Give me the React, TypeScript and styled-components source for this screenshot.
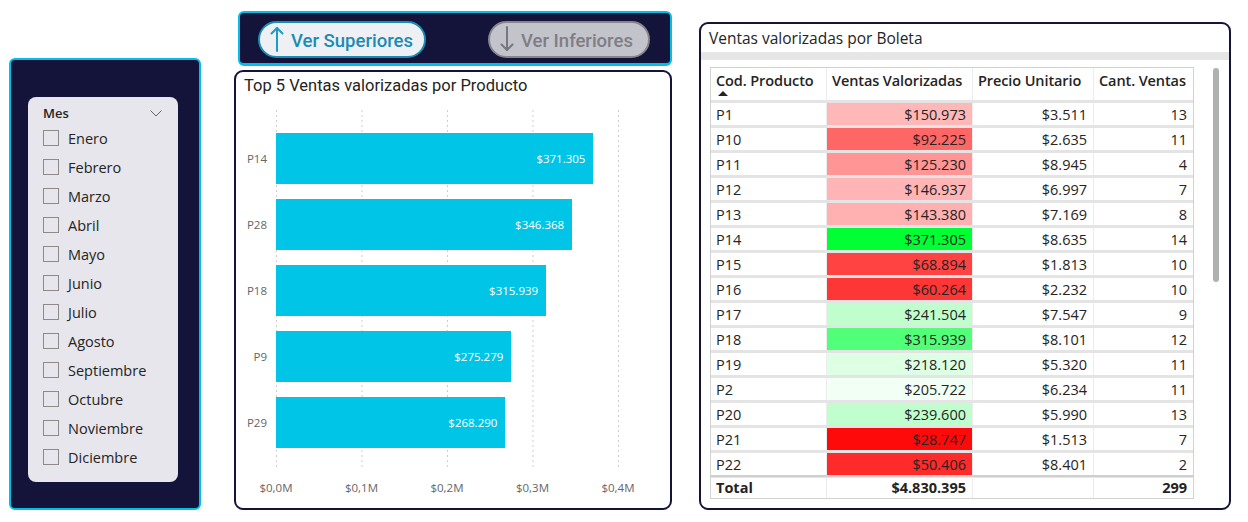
import React from "react";
import styled, { createGlobalStyle } from "styled-components";

const NAVY = "#141339";
const CYAN = "#01bfe6";
const BAR = "#01c5e6";

const Global = createGlobalStyle`
  html, body { margin: 0; padding: 0; background: #ffffff; }
  body { font-family: "Open Sans", "Noto Sans", sans-serif; color: #222; }
  * { box-sizing: border-box; }
`;

const Page = styled.div`
  width: 1248px;
  height: 522px;
  display: flex;
  align-items: flex-start;
  padding-left: 9px;
`;

/* ---------- Slicer ---------- */
const SlicerPanel = styled.div`
  margin-top: 58px;
  width: 192px;
  height: 452px;
  background: ${NAVY};
  border: 2px solid ${CYAN};
  border-radius: 6px;
  padding: 37px 0 0 17px;
`;

const SlicerCard = styled.div`
  width: 150px;
  height: 385px;
  background: #e6e6ec;
  border-radius: 8px;
  padding: 6px 0 0 15px;
`;

const SlicerHeader = styled.div`
  display: flex;
  align-items: center;
  justify-content: space-between;
  height: 20px;
  padding-right: 16px;
  font-size: 13px;
  font-weight: 600;
  color: #252423;
`;

const ItemList = styled.div`
  display: flex;
  flex-direction: column;
  gap: 13px;
  margin-top: 7px;
`;

const Item = styled.div`
  display: flex;
  align-items: center;
  height: 16px;
  gap: 9px;
  font-size: 14.5px;
  color: #252423;
`;

const Box = styled.span`
  width: 16px;
  height: 16px;
  border: 1px solid #8d8a87;
  background: #e6e6ec;
  flex: none;
`;

/* ---------- Middle ---------- */
const MiddleCol = styled.div`
  margin-left: 33px;
  width: 438px;
  display: flex;
  flex-direction: column;
  gap: 4px;
  padding-top: 11px;
`;

const ButtonBar = styled.div`
  margin-left: 4px;
  width: 434px;
  height: 55px;
  background: ${NAVY};
  border: 2px solid ${CYAN};
  border-bottom-width: 3px;
  border-radius: 6px;
  display: flex;
  align-items: center;
  justify-content: space-between;
  padding: 2px 20px 0 18px;
`;

const NavButton = styled.div<{ $active?: boolean }>`
  height: 37px;
  width: ${(p) => (p.$active ? "168px" : "162px")};
  border-radius: 19px;
  border: 2px solid ${(p) => (p.$active ? "#1b8db4" : "#85858c")};
  background: ${(p) => (p.$active ? "#eff0f4" : "#c3c3cb")};
  color: ${(p) => (p.$active ? "#1a8cb5" : "#7e7e85")};
  display: flex;
  align-items: center;
  gap: 7px;
  padding-left: 10px;
  font-family: "Roboto", "Open Sans", sans-serif;
  font-weight: 500;
  font-size: 18.5px;
`;

const ButtonLabel = styled.span`
  padding-top: 3px;
  white-space: nowrap;
`;

const ChartCard = styled.div`
  width: 438px;
  height: 440px;
  border: 2px solid ${NAVY};
  border-radius: 9px;
  background: #fff;
  display: flex;
  flex-direction: column;
`;

const CardTitle = styled.div<{ $din?: boolean }>`
  height: 28px;
  line-height: 28px;
  padding-left: 8px;
  font-family: ${(p) =>
    p.$din ? `"Roboto", "Open Sans", sans-serif` : `"Open Sans", sans-serif`};
  font-weight: ${(p) => (p.$din ? 400 : 500)};
  font-size: ${(p) => (p.$din ? "16.5px" : "15.5px")};
  color: #252423;
  white-space: nowrap;
`;

const Plot = styled.div`
  position: relative;
  margin-top: 10px;
  height: 360px;
  padding-top: 23px;
  display: flex;
  flex-direction: column;
  gap: 15px;
`;

const GridSvg = styled.svg`
  position: absolute;
  left: 40px;
  top: 0;
  z-index: 0;
`;

const BarRow = styled.div`
  position: relative;
  z-index: 1;
  height: 51px;
  display: flex;
  align-items: center;
`;

const CatLabel = styled.div`
  width: 40px;
  padding-right: 9px;
  text-align: right;
  font-size: 11.5px;
  color: #666;
`;

const Bar = styled.div`
  height: 51px;
  background: ${BAR};
  display: flex;
  align-items: center;
  justify-content: flex-end;
  padding-right: 8px;
  color: #fff;
  font-size: 11.5px;
`;

const AxisRow = styled.div`
  display: flex;
  margin-left: -2.75px;
  margin-top: 8px;
  height: 18px;
  align-items: center;
`;

const Tick = styled.div`
  width: 85.5px;
  text-align: center;
  font-size: 11.5px;
  color: #666;
`;

/* ---------- Table ---------- */
const TableCard = styled.div`
  margin-left: 27px;
  margin-top: 22px;
  width: 532px;
  height: 488px;
  border: 2px solid ${NAVY};
  border-radius: 9px;
  background: #fff;
  display: flex;
  flex-direction: column;
`;

const Band = styled.div`
  height: 8px;
  background: #e6e6e6;
`;

const TableArea = styled.div`
  display: flex;
  gap: 19px;
  margin-top: 7px;
  padding-left: 9px;
`;

const Table = styled.div`
  width: 484px;
  border: 1px solid #d2d2d2;
`;

const Row = styled.div<{ $kind?: "head" | "body" | "total" }>`
  display: grid;
  grid-template-columns: 116px 146px 121px 99px;
  height: ${(p) =>
    p.$kind === "head" ? "35px" : p.$kind === "total" ? "23px" : "25px"};
  border-bottom: ${(p) =>
    p.$kind === "total" ? "none" : "3px solid #e4e4e4"};
  border-top: ${(p) => (p.$kind === "total" ? "2px solid #cfcfcf" : "none")};
  margin-top: ${(p) => (p.$kind === "total" ? "-3px" : "0")};
`;

const Cell = styled.div<{ $right?: boolean; $bold?: boolean; $bg?: string; $last?: boolean }>`
  display: flex;
  align-items: center;
  justify-content: ${(p) => (p.$right ? "flex-end" : "flex-start")};
  padding: 0 6px 0 5px;
  font-size: 14.5px;
  font-weight: ${(p) => (p.$bold ? 700 : 400)};
  color: #252423;
  background: ${(p) => p.$bg || "transparent"};
  border-right: ${(p) => (p.$last ? "none" : "1px solid #ececec")};
  white-space: nowrap;
`;

const HeadCell = styled.div<{ $last?: boolean }>`
  display: flex;
  flex-direction: column;
  justify-content: flex-start;
  padding: 3px 0 0 5px;
  font-size: 14.5px;
  font-weight: 600;
  color: #252423;
  border-right: ${(p) => (p.$last ? "none" : "1px solid #ececec")};
  white-space: nowrap;
  letter-spacing: -0.1px;
`;

const SortTri = styled.span`
  width: 0;
  height: 0;
  margin: 1px 0 0 2px;
  border-left: 5px solid transparent;
  border-right: 5px solid transparent;
  border-bottom: 5px solid #252423;
`;

const Scrollbar = styled.div`
  width: 6px;
  height: 214px;
  margin-top: 1px;
  border-radius: 3px;
  background: #b0b0b0;
`;

const months = [
  "Enero", "Febrero", "Marzo", "Abril", "Mayo", "Junio", "Julio",
  "Agosto", "Septiembre", "Octubre", "Noviembre", "Diciembre",
];

const top5 = [
  { p: "P14", v: 371305, l: "$371.305" },
  { p: "P28", v: 346368, l: "$346.368" },
  { p: "P18", v: 315939, l: "$315.939" },
  { p: "P9", v: 275279, l: "$275.279" },
  { p: "P29", v: 268290, l: "$268.290" },
];

const rows: [string, string, string, string, string][] = [
  ["P1", "$150.973", "$3.511", "13", "#ffb8b8"],
  ["P10", "$92.225", "$2.635", "11", "#ff6666"],
  ["P11", "$125.230", "$8.945", "4", "#ff9595"],
  ["P12", "$146.937", "$6.997", "7", "#ffb5b5"],
  ["P13", "$143.380", "$7.169", "8", "#ffb1b1"],
  ["P14", "$371.305", "$8.635", "14", "#00ff33"],
  ["P15", "$68.894", "$1.813", "10", "#ff4242"],
  ["P16", "$60.264", "$2.232", "10", "#ff3636"],
  ["P17", "$241.504", "$7.547", "9", "#c0ffcd"],
  ["P18", "$315.939", "$8.101", "12", "#52ff78"],
  ["P19", "$218.120", "$5.320", "11", "#ddffe4"],
  ["P2", "$205.722", "$6.234", "11", "#f1fff4"],
  ["P20", "$239.600", "$5.990", "13", "#c0ffcd"],
  ["P21", "$28.747", "$1.513", "7", "#ff0a0a"],
  ["P22", "$50.406", "$8.401", "2", "#ff2a2a"],
];

const PX_PER_UNIT = 855 / 1000000;

const Arrow = ({ up, color }: { up: boolean; color: string }) => (
  <svg width="14" height="28" viewBox="0 0 14 28">
    {up ? (
      <g stroke={color} strokeWidth="2" fill="none" strokeLinecap="round" strokeLinejoin="round">
        <path d="M7 26 V3" />
        <path d="M1.5 8.5 L7 3 L12.5 8.5" />
      </g>
    ) : (
      <g stroke={color} strokeWidth="2" fill="none" strokeLinecap="round" strokeLinejoin="round">
        <path d="M7 2 V25" />
        <path d="M1.5 19.5 L7 25 L12.5 19.5" />
      </g>
    )}
  </svg>
);

export default function App() {
  return (
    <>
      <Global />
      <Page>
        <SlicerPanel>
          <SlicerCard>
            <SlicerHeader>
              <span>Mes</span>
              <svg width="12" height="7" viewBox="0 0 12 7">
                <path d="M0.5 0.5 L6 6 L11.5 0.5" stroke="#666" strokeWidth="1" fill="none" />
              </svg>
            </SlicerHeader>
            <ItemList>
              {months.map((m) => (
                <Item key={m}>
                  <Box />
                  <span>{m}</span>
                </Item>
              ))}
            </ItemList>
          </SlicerCard>
        </SlicerPanel>

        <MiddleCol>
          <ButtonBar>
            <NavButton $active>
              <Arrow up color="#1b9cc6" />
              <ButtonLabel>Ver Superiores</ButtonLabel>
            </NavButton>
            <NavButton>
              <Arrow up={false} color="#77777e" />
              <ButtonLabel>Ver Inferiores</ButtonLabel>
            </NavButton>
          </ButtonBar>
          <ChartCard>
            <CardTitle $din>Top 5 Ventas valorizadas por Producto</CardTitle>
            <Plot>
              <GridSvg width="350" height="360">
                {[0, 1, 2, 3, 4].map((i) => (
                  <line
                    key={i}
                    x1={0.5 + i * 85.5}
                    x2={0.5 + i * 85.5}
                    y1={0}
                    y2={360}
                    stroke="#cfcfcf"
                    strokeWidth="1"
                    strokeDasharray="2 3"
                  />
                ))}
              </GridSvg>
              {top5.map((b) => (
                <BarRow key={b.p}>
                  <CatLabel>{b.p}</CatLabel>
                  <Bar style={{ width: `${b.v * PX_PER_UNIT}px` }}>{b.l}</Bar>
                </BarRow>
              ))}
            </Plot>
            <AxisRow>
              {["$0,0M", "$0,1M", "$0,2M", "$0,3M", "$0,4M"].map((t) => (
                <Tick key={t}>{t}</Tick>
              ))}
            </AxisRow>
          </ChartCard>
        </MiddleCol>

        <TableCard>
          <CardTitle>Ventas valorizadas por Boleta</CardTitle>
          <Band />
          <TableArea>
            <Table>
              <Row $kind="head">
                <HeadCell>
                  <span>Cod. Producto</span>
                  <SortTri />
                </HeadCell>
                <HeadCell>Ventas Valorizadas</HeadCell>
                <HeadCell>Precio Unitario</HeadCell>
                <HeadCell $last>Cant. Ventas</HeadCell>
              </Row>
              {rows.map(([p, v, u, c, bg]) => (
                <Row key={p} $kind="body">
                  <Cell>{p}</Cell>
                  <Cell $right $bg={bg}>{v}</Cell>
                  <Cell $right>{u}</Cell>
                  <Cell $right $last>{c}</Cell>
                </Row>
              ))}
              <Row $kind="total">
                <Cell $bold>Total</Cell>
                <Cell $right $bold>$4.830.395</Cell>
                <Cell $right></Cell>
                <Cell $right $bold $last>299</Cell>
              </Row>
            </Table>
            <Scrollbar />
          </TableArea>
        </TableCard>
      </Page>
    </>
  );
}
